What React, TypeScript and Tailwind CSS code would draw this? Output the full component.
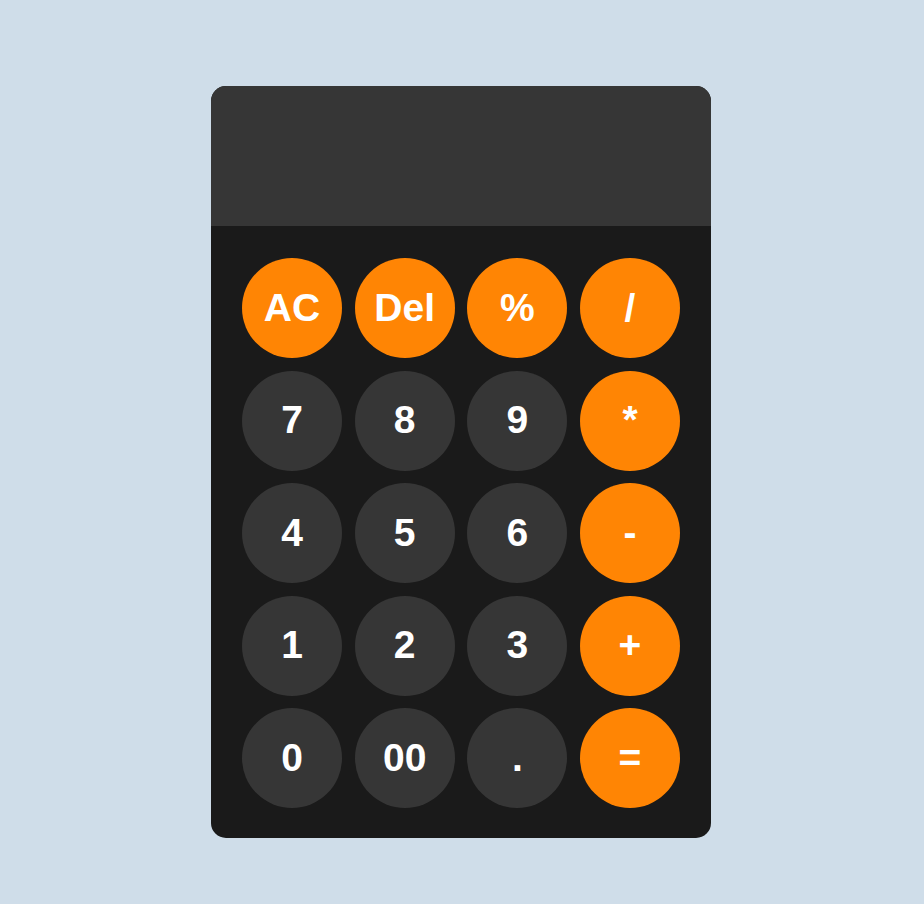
import React from 'react';

type Key = { label: string; op?: boolean };

const KEYS: Key[] = [
  { label: 'AC', op: true },
  { label: 'Del', op: true },
  { label: '%', op: true },
  { label: '/', op: true },
  { label: '7' },
  { label: '8' },
  { label: '9' },
  { label: '*', op: true },
  { label: '4' },
  { label: '5' },
  { label: '6' },
  { label: '-', op: true },
  { label: '1' },
  { label: '2' },
  { label: '3' },
  { label: '+', op: true },
  { label: '0' },
  { label: '00' },
  { label: '.' },
  { label: '=', op: true },
];

export default function App() {
  return (
    <div className="flex min-h-screen justify-center bg-[#cfdde9] pt-[86px] pr-[2px] font-['Liberation_Sans',Arial,sans-serif]">
      <div className="h-fit w-[500px] overflow-hidden rounded-[15px] bg-[#1a1a1a]">
        {/* display */}
        <div className="h-[140px] bg-[#363636]" />

        {/* keypad */}
        <div className="grid grid-cols-[repeat(4,100px)] gap-x-[12.67px] gap-y-[12.5px] pl-[31px] pt-[32px] pb-[30px]">
          {KEYS.map((k) => (
            <button
              key={k.label}
              className={
                'flex h-[100px] w-[100px] items-center justify-center rounded-full text-[39px] font-bold text-white ' +
                (k.op ? 'bg-[#ff8504]' : 'bg-[#363636]')
              }
            >
              {k.label}
            </button>
          ))}
        </div>
      </div>
    </div>
  );
}
